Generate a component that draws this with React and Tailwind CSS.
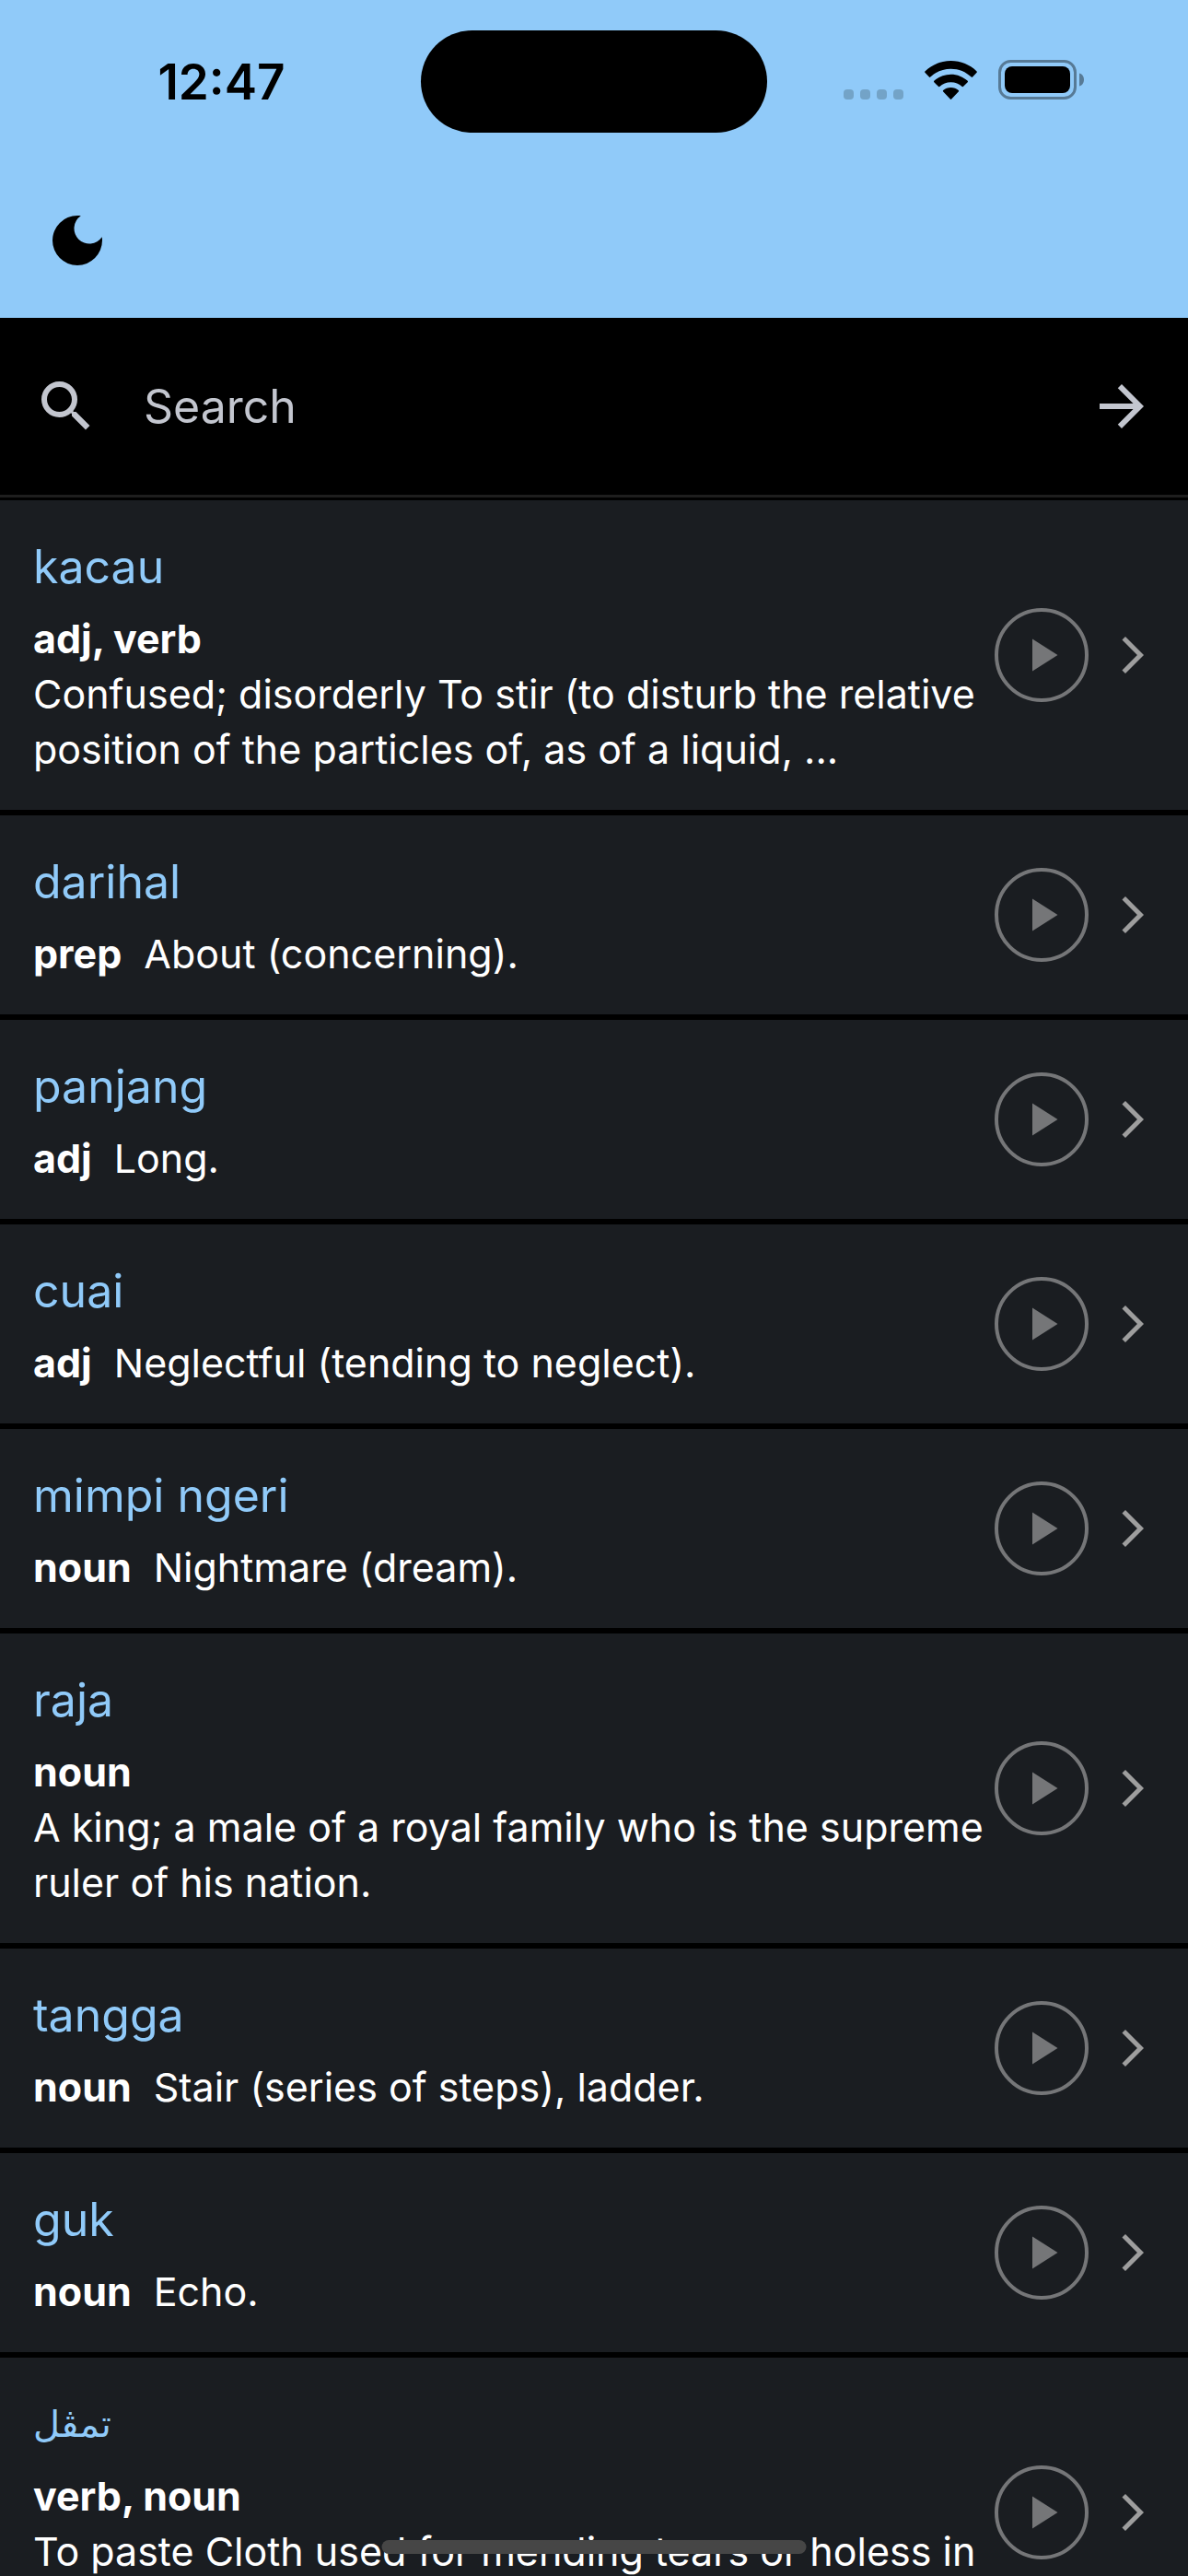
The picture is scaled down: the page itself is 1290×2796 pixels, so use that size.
const entries = [
  { word: 'kacau', kind: 'adj, verb', meaning: 'Confused; disorderly To stir (to disturb the relative position of the particles of, as of a liquid, ...', stacked: true },
  { word: 'darihal', kind: 'prep', meaning: 'About (concerning).' },
  { word: 'panjang', kind: 'adj', meaning: 'Long.' },
  { word: 'cuai', kind: 'adj', meaning: 'Neglectful (tending to neglect).' },
  { word: 'mimpi ngeri', kind: 'noun', meaning: 'Nightmare (dream).' },
  { word: 'raja', kind: 'noun', meaning: 'A king; a male of a royal family who is the supreme ruler of his nation.', stacked: true },
  { word: 'tangga', kind: 'noun', meaning: 'Stair (series of steps), ladder.' },
  { word: 'guk', kind: 'noun', meaning: 'Echo.' },
  { word: 'تمڤل', kind: 'verb, noun', meaning: 'To paste Cloth used for mending tears or holess in', stacked: true, jawi: true },
];

function Wifi() {
  return (
    <svg viewBox="0 0 57 42" className="h-[42px] w-[57px]" fill="currentColor" aria-hidden="true">
      <path d="M28.5 0C39.4 0 49.3 4.3 56.6 11.4Q57.2 12.1 56.6 12.8L52.1 17.6Q51.4 18.3 50.7 17.6C44.9 12 37.1 8.7 28.5 8.7S12.1 12 6.3 17.6Q5.6 18.3 4.9 17.6L.4 12.8Q-.2 12.1.4 11.4C7.7 4.3 17.6 0 28.5 0Z" />
      <path d="M28.5 14.7C35.5 14.7 41.9 17.4 46.7 21.8Q47.3 22.5 46.7 23.2L42.1 27.8Q41.4 28.5 40.7 27.9C37.5 25 33.2 23.2 28.5 23.2S19.5 25 16.3 27.9Q15.6 28.5 14.9 27.8L10.3 23.2Q9.7 22.5 10.3 21.8C15.1 17.4 21.5 14.7 28.5 14.7Z" />
      <path d="M28.5 29C31.7 29 34.6 30.2 36.8 32.1Q37.5 32.8 36.8 33.5L29.2 41.6Q28.5 42.3 27.8 41.6L20.2 33.5Q19.5 32.8 20.2 32.1C22.4 30.2 25.3 29 28.5 29Z" />
    </svg>
  );
}

function Battery() {
  return (
    <svg viewBox="0 0 93 43" className="h-[43px] w-[93px]" aria-hidden="true">
      <rect x="1.5" y="1.5" width="82" height="40" rx="12" fill="none" stroke="#577a96" strokeWidth="3" />
      <rect x="7" y="7" width="71" height="29" rx="8" fill="#000" />
      <path d="M88 14.500C91.5 15.500 93 18.500 93 21.5S91.5 27.500 88 28.500Z" fill="#577a96" />
    </svg>
  );
}

function StatusBar() {
  return (
    <div className="grid grid-cols-[1fr_376px_1fr] items-center pt-[33px] text-black">
      <time className="justify-self-center pl-6 text-[53px] leading-[60px] font-semibold">12:47</time>
      <div className="h-[111px] rounded-full bg-black" />
      <div className="flex items-center justify-end gap-[23px] pr-[113px] pb-1">
        <div className="flex h-[42px] items-end gap-[7px]">
          <span className="size-[11px] rounded-[4px] bg-[#73a3c7]" />
          <span className="size-[11px] rounded-[4px] bg-[#73a3c7]" />
          <span className="size-[11px] rounded-[4px] bg-[#73a3c7]" />
          <span className="size-[11px] rounded-[4px] bg-[#73a3c7]" />
        </div>
        <Wifi />
        <Battery />
      </div>
    </div>
  );
}

function Entry({ word, kind, meaning, stacked, jawi }) {
  return (
    <li className="flex items-center bg-[#1a1d21] px-9 py-9">
      <div className="min-w-0 flex-1">
        <h2 className={jawi ? 'text-[40px] leading-[72px] text-[#90caf9]' : 'text-[50px] leading-[72px] text-[#90caf9]'}>{word}</h2>
        <p className={stacked ? 'mt-3 min-h-[180px] text-[43px] leading-[60px] text-white' : 'mt-3 text-[43px] leading-[60px] text-white'}>
          <b className={stacked ? 'block font-bold' : 'mr-6 font-bold'}>{kind}</b>
          {meaning}
        </p>
      </div>
      <button type="button" aria-label={'Play ' + word} className="flex size-[102px] shrink-0 items-center justify-center rounded-full border-4 border-[#757678] text-[#757678]">
        <svg viewBox="0 0 24 24" className="size-[60px]" fill="currentColor" aria-hidden="true">
          <path d="M8 5v14l11-7z" />
        </svg>
      </button>
      <button type="button" aria-label={'Open ' + word} className="ml-6 shrink-0 text-[#9e9e9e]">
        <svg viewBox="0 0 24 24" className="size-12" fill="currentColor" aria-hidden="true">
          <path d="M6.23 20.23 8 22l10-10L8 2 6.23 3.77 14.46 12z" />
        </svg>
      </button>
    </li>
  );
}

export default function App() {
  return (
    <div className="h-screen overflow-hidden bg-black font-['Inter','DejaVu_Sans',sans-serif]">
      <header className="h-[345px] bg-[#90caf9]">
        <StatusBar />
        <button type="button" aria-label="Toggle dark mode" className="mt-[81px] ml-12 block text-black">
          <svg viewBox="0 0 72 72" className="size-[72px]" fill="currentColor" aria-hidden="true">
            <path d="M36 9A27 27 0 1 0 63 36C63 34.5 62.9 33.5 62.7 32.2A16.5 16.5 0 1 1 39.8 9.3C38.5 9.1 37.5 9 36 9Z" />
          </svg>
        </button>
      </header>

      <form role="search" className="flex h-[195px] items-center border-b-3 border-[#1e1e1e] px-9 text-[#c3c6cf]" onSubmit={(e) => e.preventDefault()}>
        <svg viewBox="0 0 24 24" className="size-[72px] shrink-0" fill="currentColor" aria-hidden="true">
          <path d="M15.5 14h-.79l-.28-.27A6.471 6.471 0 0 0 16 9.5 6.5 6.5 0 1 0 9.5 16c1.61 0 3.09-.59 4.23-1.57l.27.28v.79l5 4.99L20.49 19l-4.99-5zm-6 0C7.01 14 5 11.99 5 9.5S7.01 5 9.5 5 14 7.01 14 9.5 11.99 14 9.5 14z" />
        </svg>
        <input type="text" aria-label="Search" placeholder="Search" className="ml-12 min-w-0 flex-1 bg-transparent text-[50px] leading-[72px] outline-none placeholder:text-[#c3c6cf]" />
        <button type="submit" aria-label="Submit search" className="shrink-0">
          <svg viewBox="0 0 24 24" className="size-[72px]" fill="currentColor" aria-hidden="true">
            <path d="m12 4-1.41 1.41L16.17 11H4v2h12.17l-5.58 5.59L12 20l8-8z" />
          </svg>
        </button>
      </form>

      <ul className="flex flex-col gap-1.5 pt-[3px]">
        {entries.map((entry) => (
          <Entry key={entry.word} {...entry} />
        ))}
      </ul>

      <div className="fixed bottom-6 left-1/2 h-[15px] w-[461px] -translate-x-1/2 rounded-full bg-[#464646]" />
    </div>
  );
}
